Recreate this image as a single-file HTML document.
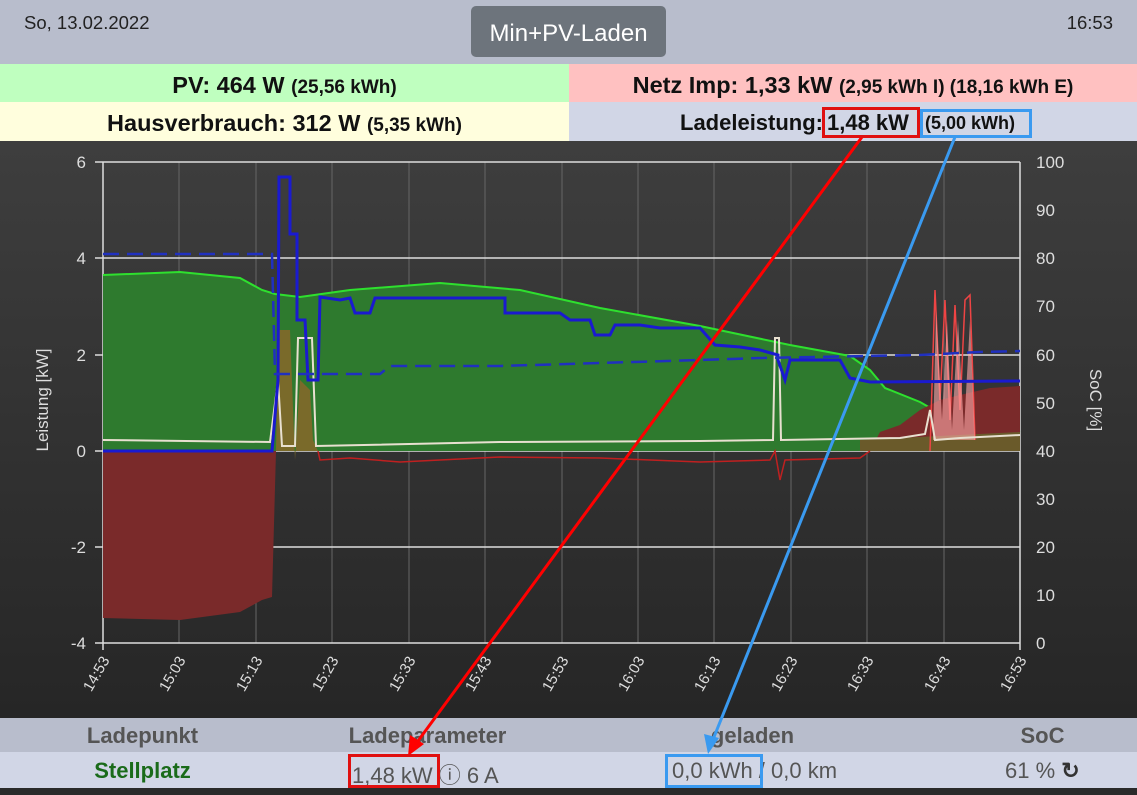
<!DOCTYPE html>
<html><head><meta charset="utf-8"><style>
body{margin:0;width:1137px;height:795px;overflow:hidden;font-family:"Liberation Sans",sans-serif;background:#2a2a2a;position:relative}
.hdr{position:absolute;left:0;top:0;width:1137px;height:64px;background:#b8bdcc}
.date{position:absolute;left:24px;top:12px;font-size:18.5px;color:#222}
.time{position:absolute;right:24px;top:12px;font-size:18.5px;color:#222}
.btn{position:absolute;left:471px;top:6px;width:195px;height:51px;background:#6d747c;border-radius:5px;color:#fff;font-size:24px;text-align:center;line-height:55px}
.row{position:absolute;height:38px;line-height:42px;text-align:center;font-weight:bold;font-size:23.5px;color:#111;white-space:nowrap}
.row small{font-size:19px}
.row span{position:absolute;top:0}
.bx{position:absolute;border:3px solid}
.tbl{position:absolute;left:0;width:1137px;font-weight:bold;font-size:22px;color:#555}
.tbl div{position:absolute;text-align:center;white-space:nowrap}
</style></head><body>
<div class="hdr"><div class="date">So, 13.02.2022</div><div class="btn">Min+PV-Laden</div><div class="time">16:53</div></div>
<div class="row" style="left:0;top:64px;width:569px;background:#bfffbf">PV: 464 W <small>(25,56 kWh)</small></div>
<div class="row" style="left:569px;top:64px;width:568px;background:#ffc1c1">Netz Imp: 1,33 kW <small>(2,95 kWh I) (18,16 kWh E)</small></div>
<div class="row" style="left:0;top:102px;width:569px;background:#fffedd;height:39px">Hausverbrauch: 312 W <small>(5,35 kWh)</small></div>
<div class="row" style="left:569px;top:102px;width:568px;background:#d1d6e6;height:39px;font-size:22px"><span style="left:111px">Ladeleistung:</span><span style="left:258px">1,48 kW</span><span style="left:356px;font-size:18px">(5,00 kWh)</span></div>
<svg style="position:absolute;left:0;top:141px" width="1137" height="577" viewBox="0 141 1137 577">
<defs><linearGradient id="g" x1="0" y1="0" x2="0" y2="1"><stop offset="0" stop-color="#3e3e3e"/><stop offset="1" stop-color="#262626"/></linearGradient></defs>
<rect x="0" y="141" width="1137" height="577" fill="url(#g)"/>
<g stroke="#666" stroke-width="1">
<line x1="179" y1="162" x2="179" y2="643"/><line x1="256" y1="162" x2="256" y2="643"/><line x1="332" y1="162" x2="332" y2="643"/><line x1="409" y1="162" x2="409" y2="643"/><line x1="485" y1="162" x2="485" y2="643"/><line x1="562" y1="162" x2="562" y2="643"/><line x1="638" y1="162" x2="638" y2="643"/><line x1="714" y1="162" x2="714" y2="643"/><line x1="791" y1="162" x2="791" y2="643"/><line x1="867" y1="162" x2="867" y2="643"/><line x1="944" y1="162" x2="944" y2="643"/></g>
<g stroke="#ddd" stroke-width="1.5"><line x1="95" y1="162" x2="1020" y2="162"/><line x1="95" y1="258" x2="1020" y2="258"/><line x1="95" y1="355" x2="1020" y2="355"/><line x1="95" y1="451" x2="1020" y2="451"/><line x1="95" y1="547" x2="1020" y2="547"/><line x1="95" y1="643" x2="1020" y2="643"/><line x1="103" y1="162" x2="103" y2="650"/><line x1="1020" y1="162" x2="1020" y2="650"/></g>
<polygon fill="#2e7a2e" points="103,451 103,275 180,272 240,278 262,290 275,294 300,297 350,290 440,283 520,290 600,308 700,326 790,345 850,356 870,370 885,388 920,402 960,425 1020,432 1020,451"/>
<polyline fill="none" stroke="#2ee02e" stroke-width="2" points="103,275 180,272 240,278 262,290 275,294 300,297 350,290 440,283 520,290 600,308 700,326 790,345 850,356 870,370 885,388 920,402 960,425 1020,432"/>
<polygon fill="#7a2a2a" points="103,451 103,618 180,620 240,612 262,600 272,597 276,451"/>
<polygon fill="#7a2a2a" points="870,451 880,432 900,425 920,410 940,400 960,395 990,388 1020,386 1020,451"/>
<polygon fill="#7a6a2a" points="276,451 278,330 290,330 295,460 300,380 310,390 313,440 318,451"/>
<polygon fill="#6a5a2a" points="860,451 1020,451 1020,432 860,440"/>
<polyline fill="none" stroke="#c02020" stroke-width="1.5" points="318,451 320,460 350,458 400,462 500,457 600,458 700,462 770,460 775,451 780,480 785,460 860,458 870,451"/>
<polyline fill="none" stroke="#ee4444" stroke-width="1.5" points="930,451 935,290 940,400 945,300 950,420 955,305 960,410 965,300 970,295 975,440"/>
<polygon fill="#ffaaaa" opacity=".6" points="933,440 936,310 942,420 947,320 952,430 958,320 964,430 970,320 975,440"/>
<polyline fill="none" stroke="#e8e0d0" stroke-width="2" points="103,440 270,442 278,380 282,446 295,446 298,338 312,338 316,446 500,442 700,441 773,440 775,338 779,338 781,440 900,438 925,434 930,410 935,440 960,438 1020,435"/>
<polyline fill="none" stroke="#1a1ad0" stroke-width="3" points="103,451 272,451 278,380 279,177 290,177 290,234 297,234 297,320 305,320 308,380 318,380 320,297 340,300 350,298 355,313 370,313 375,298 410,298 440,298 450,298 505,298 505,313 560,313 570,320 590,320 595,335 610,335 615,325 640,325 660,328 700,328 715,345 740,347 760,350 778,355 778,360 785,380 790,360 840,360 850,378 870,382 1020,381"/>
<polyline fill="none" stroke="#2030c0" stroke-width="2.5" stroke-dasharray="16,8" points="103,254 272,254 275,374 380,374 390,366 500,366 700,360 760,358 920,355 980,352 1020,351"/>
<g fill="#ddd" font-size="17" text-anchor="end"><text x="86" y="168">6</text><text x="86" y="264">4</text><text x="86" y="361">2</text><text x="86" y="457">0</text><text x="86" y="553">-2</text><text x="86" y="649">-4</text></g>
<g fill="#ddd" font-size="17"><text x="1036" y="168">100</text><text x="1036" y="216">90</text><text x="1036" y="264">80</text><text x="1036" y="312">70</text><text x="1036" y="361">60</text><text x="1036" y="409">50</text><text x="1036" y="457">40</text><text x="1036" y="505">30</text><text x="1036" y="553">20</text><text x="1036" y="601">10</text><text x="1036" y="649">0</text></g>
<text transform="translate(48,400) rotate(-90)" fill="#ddd" font-size="17" text-anchor="middle">Leistung [kW]</text>
<text transform="translate(1090,400) rotate(90)" fill="#ddd" font-size="17" text-anchor="middle">SoC [%]</text>
<g fill="#ddd" font-size="15" text-anchor="end">
<text transform="translate(110,660) rotate(-60)">14:53</text><text transform="translate(186,660) rotate(-60)">15:03</text><text transform="translate(263,660) rotate(-60)">15:13</text><text transform="translate(339,660) rotate(-60)">15:23</text><text transform="translate(416,660) rotate(-60)">15:33</text><text transform="translate(492,660) rotate(-60)">15:43</text><text transform="translate(569,660) rotate(-60)">15:53</text><text transform="translate(645,660) rotate(-60)">16:03</text><text transform="translate(721,660) rotate(-60)">16:13</text><text transform="translate(798,660) rotate(-60)">16:23</text><text transform="translate(874,660) rotate(-60)">16:33</text><text transform="translate(951,660) rotate(-60)">16:43</text><text transform="translate(1027,660) rotate(-60)">16:53</text></g>
</svg>
<div class="tbl" style="top:718px;height:34px;background:#b8bdcc"><div style="left:40px;width:205px;top:5px">Ladepunkt</div><div style="left:325px;width:205px;top:5px">Ladeparameter</div><div style="left:650px;width:205px;top:5px">geladen</div><div style="left:940px;width:205px;top:5px">SoC</div></div>
<div class="tbl" style="top:752px;height:36px;background:#d1d6e6;font-weight:normal"><div style="left:40px;width:205px;top:6px;color:#1a6b1a;font-weight:bold">Stellplatz</div><div style="left:352px;top:6px">1,48 kW ⓘ 6 A</div><div style="left:672px;top:6px">0,0 kWh / 0,0 km</div><div style="left:1005px;top:6px">61 % <b style="color:#333">↻</b></div></div>
<svg style="position:absolute;left:0;top:0" width="1137" height="795">
<line x1="862" y1="137" x2="415" y2="745" stroke="#f00" stroke-width="3"/><polygon fill="#f00" points="408,756 410,735 424,744"/>
<line x1="955" y1="137" x2="712" y2="742" stroke="#3a9af0" stroke-width="3"/><polygon fill="#3a9af0" points="708,754 704,734 719,738"/>
</svg>
<div class="bx" style="left:822px;top:107px;width:92px;height:25px;border-color:#e01010"></div>
<div class="bx" style="left:920px;top:109px;width:106px;height:23px;border-color:#3a9af0"></div>
<div class="bx" style="left:348px;top:754px;width:86px;height:28px;border-color:#e01010"></div>
<div class="bx" style="left:665px;top:754px;width:92px;height:28px;border-color:#3a9af0"></div>
</body></html>
